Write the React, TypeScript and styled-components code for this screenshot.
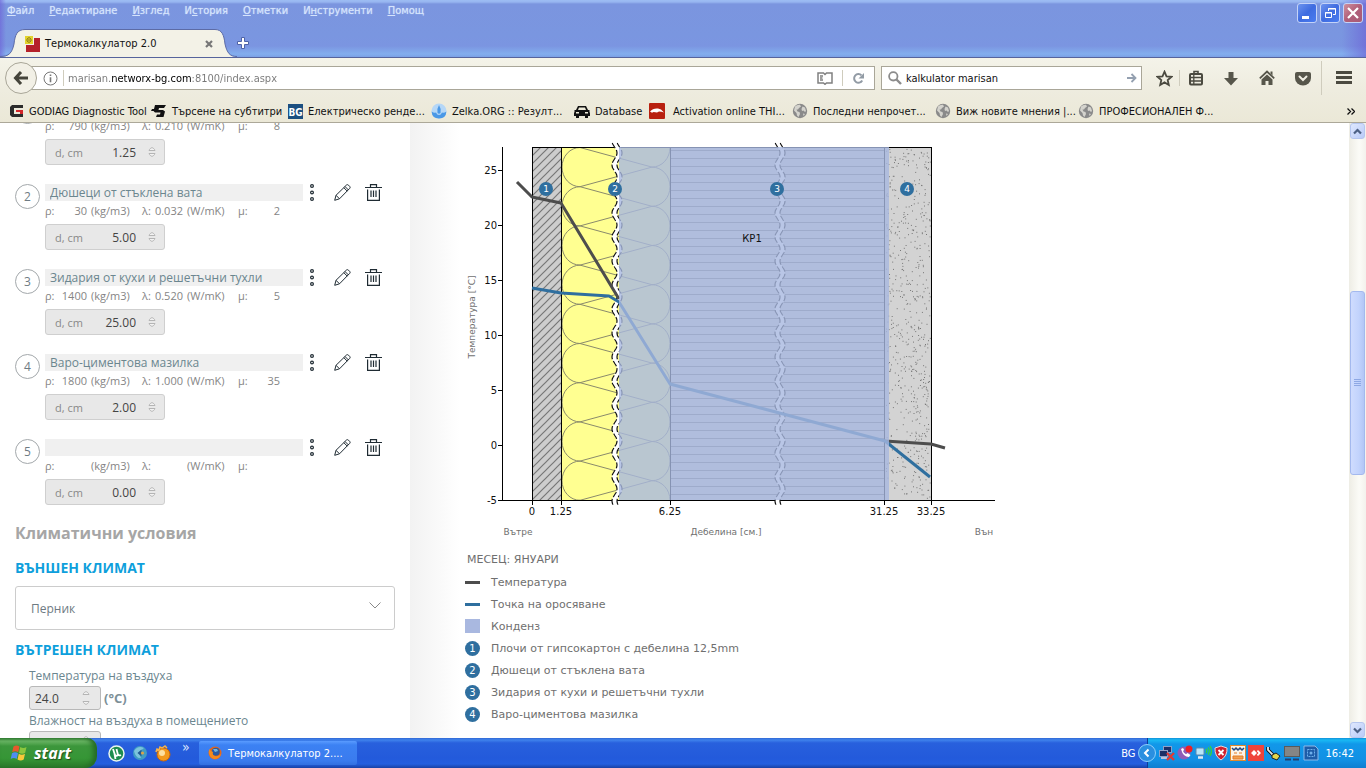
import React from 'react';
import styled, { createGlobalStyle } from 'styled-components';

const ui = '"DejaVu Sans Condensed", Tahoma, "DejaVu Sans", sans-serif';
const web = '"Open Sans", "Noto Sans", sans-serif';
const verdana = '"DejaVu Sans", Verdana, sans-serif';

const GlobalStyle = createGlobalStyle`
  * { box-sizing: border-box; }
  body { margin: 0; overflow: hidden; background: #fff; }
  button, input, select { font: inherit; color: inherit; margin: 0; padding: 0; border: 0; background: none; }
  svg { display: block; flex: none; }
  ul { list-style: none; margin: 0; padding: 0; }
  a { color: inherit; text-decoration: none; }
`;

const Screen = styled.div`
  display: flex;
  flex-direction: column;
  height: 100vh;
  font-family: ${ui};
  font-size: 11px;
  color: #111;
`;

/* ---------- Window title, menu and tabs ---------- */

const TitleArea = styled.header`
  display: flex;
  flex-direction: column;
  height: 58px;
  flex: none;
  background:
    linear-gradient(to right, rgba(111, 102, 216, 0.7) 0, rgba(111, 102, 216, 0) 6px, rgba(111, 102, 216, 0) calc(100% - 24px), rgba(106, 92, 212, 0.6) 100%),
    linear-gradient(to bottom, #9dbdf3 0, #97b5f0 2px, #7b95df 4px, #7a96e0 35px, #7b95e1 46px, #83aeee 54px, #7ba0e6 57px);
  border-bottom: 1px solid #56649c;
`;

const TitleTop = styled.div`
  display: flex;
  justify-content: space-between;
  height: 30px;
  padding: 3px 3px 0 7px;
`;

const MenuBar = styled.nav`
  display: flex;
  gap: 15px;
  height: 15px;
  line-height: 15px;
`;

const MenuItem = styled.button`
  color: #d6e4fc;
  white-space: nowrap;
  text-shadow: 0 0 1px #c5d6f8;
`;

const WindowButtons = styled.div`
  display: flex;
  gap: 3px;
`;

const WindowButton = styled.button<{ $close?: boolean }>`
  display: flex;
  align-items: center;
  justify-content: center;
  width: 20px;
  height: 20px;
  border: 1px solid #c4d3f8;
  border-radius: 3px;
  background: ${(p) => (p.$close
    ? 'linear-gradient(135deg, #d0909c, #b05f7a 50%, #a85a76)'
    : 'linear-gradient(135deg, #6c93ee, #3f6ce0 50%, #4a7cf0)')};
`;

const TabStrip = styled.div`
  display: flex;
  height: 28px;
`;

const TabBody = styled.div`
  display: flex;
  align-items: center;
  width: 190px;
  padding-right: 2px;
  background: #f3f2e7;
  border-top: 1px solid #5c6ba6;
`;

const TabTitle = styled.span`
  flex: 1;
  margin-left: 5px;
  white-space: nowrap;
`;

const IconButton = styled.button<{ $w?: number }>`
  display: flex;
  align-items: center;
  justify-content: center;
  flex: none;
  width: ${(p) => (p.$w ? `${p.$w}px` : 'auto')};
`;

/* ---------- Navigation toolbar ---------- */

const Chrome = styled.div`
  flex: none;
  background: linear-gradient(to bottom, #f4f3e9, #eeecdf 50%, #ebe8d7);
  border-bottom: 1px solid #aca899;
`;

const NavBar = styled.div`
  display: flex;
  align-items: center;
  height: 40px;
  padding-left: 5px;
`;

const BackButton = styled.button`
  display: flex;
  align-items: center;
  justify-content: center;
  position: relative;
  z-index: 1;
  width: 32px;
  height: 32px;
  flex: none;
  border: 1px solid #a9a698;
  border-radius: 50%;
  background: #f2f0e6;
`;

const Field = styled.div<{ $w?: number }>`
  display: flex;
  align-items: center;
  ${(p) => (p.$w ? `flex: none; width: ${p.$w}px;` : 'flex: 1; min-width: 0;')}
  height: 24px;
  border: 1px solid #a9a698;
  background: #fff;
`;

const AddressField = styled(Field)`
  margin-left: -6px;
  padding: 0 9px 0 11px;
`;

const SearchField = styled(Field)`
  margin: 0 7px 0 6px;
  padding: 0 4px 0 6px;
`;

const Divider = styled.span<{ $h: number }>`
  flex: none;
  width: 1px;
  height: ${(p) => p.$h}px;
  background: #cfccbd;
`;

const AddressInput = styled.input`
  flex: 1;
  min-width: 0;
  margin-left: 4px;
  outline: 0;
  background: linear-gradient(to right, #777 0, #777 43px, #000 43px, #000 124px, #777 124px);
  -webkit-background-clip: text;
  background-clip: text;
  -webkit-text-fill-color: transparent;
`;

const SearchInput = styled.input`
  flex: 1;
  min-width: 0;
  margin-left: 4px;
  outline: 0;
`;

const FieldIcons = styled.div`
  display: flex;
  align-items: center;
  gap: 9px;
`;

const InfoIcons = styled(FieldIcons)`
  gap: 5px;
`;

const Bookmarks = styled.nav`
  display: flex;
  align-items: center;
  height: 24px;
  padding: 2px 11px 0 9px;
`;

const Bookmark = styled.a<{ $w: number }>`
  display: flex;
  align-items: center;
  flex: 0 1 ${(p) => p.$w}px;
  gap: 5px;
  white-space: nowrap;
`;

const MoreBookmarks = styled.button`
  margin-left: auto;
`;

/* ---------- Page ---------- */

const Page = styled.main`
  display: flex;
  flex: 1;
  min-height: 0;
  font-family: ${web};
`;

const Sidebar = styled.section`
  flex: none;
  width: 410px;
  padding: 0 15px;
  overflow: hidden;
  color: #6e7b83;
`;

const LayerList = styled.ul`
  margin-top: -24px;
`;

const Layer = styled.li`
  display: flex;
  gap: 5px;
  height: 85px;
`;

const LayerNumber = styled.span`
  display: flex;
  align-items: center;
  justify-content: center;
  flex: none;
  width: 25px;
  height: 25px;
  border: 1px solid #a3a8ab;
  border-radius: 50%;
  font-size: 12px;
`;

const LayerBody = styled.div`
  flex: 1;
`;

const LayerHead = styled.div`
  display: flex;
  height: 17px;
`;

const NameInput = styled.input`
  width: 258px;
  height: 17px;
  padding: 0 5px;
  margin-right: 6px;
  background: #f0f0f0;
  color: #6b868f;
  font-size: 12px;
  line-height: 17px;
`;

const Tools = styled.div`
  display: flex;
  align-items: center;
`;

const PencilSlot = styled(IconButton)`
  margin: 0 14px 0 19px;
`;

const Params = styled.div`
  display: grid;
  grid-template-columns: 12px 30px 55px 15px 26px 55px 12px 30px;
  height: 20px;
  margin-bottom: 3px;
  font-size: 11px;
  line-height: 20px;
  color: #858585;
  white-space: nowrap;
`;

const ParamValue = styled.span`
  justify-self: end;
`;

const ParamUnit = styled.span`
  padding-left: 4px;
`;

const Thickness = styled.label`
  display: flex;
  align-items: center;
  width: 120px;
  height: 26px;
  padding: 0 8px 0 9px;
  border: 1px solid #cfcfcf;
  border-radius: 3px;
  background: #e8e8e8;
  font-size: 11px;
  color: #888;
`;

const ThicknessInput = styled.input`
  flex: 1;
  min-width: 0;
  margin-right: 12px;
  text-align: right;
  font-size: 12px;
  color: #444;
`;

const SectionTitle = styled.h2`
  margin: 0;
  height: 24px;
  font-size: 16px;
  line-height: 18px;
  color: #a6a6a6;
`;

const GroupTitle = styled.h3`
  margin: 0;
  padding-top: 10px;
  height: 38px;
  font-size: 14px;
  line-height: 20px;
  color: #0e9fdc;
`;

const SelectBox = styled.div`
  position: relative;
  height: 44px;
  border: 1px solid #ccc;
  border-radius: 3px;
`;

const CitySelect = styled.select`
  appearance: none;
  width: 100%;
  height: 100%;
  padding-left: 15px;
  font-size: 12px;
`;

const SelectArrow = styled.svg`
  position: absolute;
  right: 13px;
  top: 15px;
  pointer-events: none;
`;

const Climate = styled.div`
  margin-top: -3px;
  padding-left: 14px;
`;

const ClimateLabel = styled.label`
  display: block;
  height: 21px;
  font-size: 12px;
  line-height: 21px;
  color: #6b868f;
`;

const ClimateRow = styled.div`
  display: flex;
  align-items: center;
  gap: 3px;
  height: 24px;
  font-size: 13px;
  font-weight: 700;
  color: #7d9098;
`;

const ClimateField = styled.span`
  display: flex;
  align-items: center;
  width: 72px;
  height: 24px;
  padding: 0 10px 0 5px;
  border: 1px solid #b8b8b8;
  border-radius: 3px;
  background: #e8e8e8;
`;

const ClimateInput = styled.input`
  flex: 1;
  min-width: 0;
  font-size: 12px;
  font-weight: 400;
  color: #444;
`;

const Results = styled.section`
  flex: 1;
  min-width: 0;
  padding: 15px 0 0 50px;
  overflow: hidden;
  background: linear-gradient(to right, #f2f2f2 0, #f7f7f7 20px, #fff 50px);
`;

const Chart = styled.svg`
  font-family: ${verdana};
  font-size: 10px;
`;

const Legend = styled.ul`
  margin: 7px 0 0 5px;
  font-family: ${verdana};
  font-size: 11px;
  color: #6f6f6f;
`;

const LegendTitle = styled.li`
  padding-left: 2px;
  height: 22px;
  line-height: 22px;
`;

const LegendRow = styled.li`
  display: flex;
  align-items: center;
  gap: 11px;
  height: 22px;
`;

const Swatch = styled.span<{ $h: number; $color: string }>`
  width: 15px;
  height: ${(p) => p.$h}px;
  background: ${(p) => p.$color};
`;

const LegendBadge = styled.span`
  width: 15px;
  height: 15px;
  border-radius: 50%;
  background: #2f6f9f;
  color: #fff;
  font-size: 10px;
  line-height: 15px;
  text-align: center;
`;

const ScrollBar = styled.div`
  display: flex;
  flex-direction: column;
  flex: none;
  width: 17px;
  padding: 0 1px;
  background: linear-gradient(to right, #eeede5, #fbfbf7 60%, #f3f1ec);
`;

const ScrollButton = styled.button`
  display: flex;
  align-items: center;
  justify-content: center;
  flex: none;
  height: 16px;
  border: 1px solid #b5c6ef;
  border-radius: 3px;
  background: linear-gradient(135deg, #dfe8fe, #b9cbf8);
`;

const ScrollThumb = styled.div`
  display: flex;
  align-items: center;
  justify-content: center;
  height: 184px;
  border: 1px solid #a4b9ee;
  border-radius: 3px;
  background: linear-gradient(to right, #cfdcfe, #c2d3fc 60%, #b3c6f6);
`;

const ScrollGap = styled.div<{ $grow: number }>`
  flex: ${(p) => p.$grow};
`;

/* ---------- Taskbar ---------- */

const TaskBar = styled.footer`
  display: flex;
  align-items: center;
  flex: none;
  height: 30px;
  color: #fff;
  background: linear-gradient(to bottom, #3168d5 0, #3f82ec 2px, #2860dd 5px, #235adb 20px, #245fdf 26px, #1941a5 30px);
`;

const StartButton = styled.button`
  display: flex;
  align-items: center;
  gap: 6px;
  width: 97px;
  height: 30px;
  padding-left: 10px;
  border-radius: 0 10px 12px 0;
  background: linear-gradient(to bottom, #3c8a3c 0, #6cb866 3px, #3c963c 8px, #369636 20px, #2b7b2b 30px);
  box-shadow: inset -4px 0 5px #256b25;
  font-family: "Open Sans", sans-serif;
  font-size: 16px;
  font-weight: 700;
  font-style: italic;
  line-height: 20px;
  color: #fff;
  text-shadow: 1px 1px 1px #1e4f1e;
`;

const QuickLaunch = styled.div`
  display: flex;
  align-items: center;
  gap: 7px;
  width: 102px;
  height: 30px;
  padding-left: 11px;
`;

const MoreQuick = styled.button`
  align-self: flex-start;
  padding: 3px 0 0 4px;
  font-size: 14px;
  line-height: 12px;
  color: #dbe6ff;
`;

const TaskButton = styled.button`
  display: flex;
  align-items: center;
  gap: 6px;
  width: 158px;
  height: 24px;
  padding-left: 9px;
  border-radius: 2px;
  background: linear-gradient(to bottom, #5a9bff, #3c81f3 4px, #3a7bee 20px, #3370e0);
  white-space: nowrap;
`;

const Language = styled.button`
  margin-left: auto;
  padding-right: 12px;
`;

const Tray = styled.div`
  display: flex;
  align-items: center;
  gap: 2px;
  height: 30px;
  padding-right: 12px;
  border-left: 1px solid #0f3c96;
  background: linear-gradient(to bottom, #1290d8 0, #19b9f4 2px, #1198e9 6px, #1290e4 22px, #0f7ed0 30px);
`;

const TrayToggle = styled.button`
  position: relative;
  margin-left: -10px;
`;

const Clock = styled.time`
  margin-left: 4px;
  white-space: nowrap;
`;

/* ---------- Data ---------- */

interface LayerData { n: number; name: string; rho: string; lambda: string; mu: string; d: string }

const layers: LayerData[] = [
  { n: 1, name: 'Плочи от гипсокартон с дебелина 12,5mm', rho: '790', lambda: '0.210', mu: '8', d: '1.25' },
  { n: 2, name: 'Дюшеци от стъклена вата', rho: '30', lambda: '0.032', mu: '2', d: '5.00' },
  { n: 3, name: 'Зидария от кухи и решетъчни тухли', rho: '1400', lambda: '0.520', mu: '5', d: '25.00' },
  { n: 4, name: 'Варо-циментова мазилка', rho: '1800', lambda: '1.000', mu: '35', d: '2.00' },
  { n: 5, name: '', rho: '', lambda: '', mu: '', d: '0.00' },
];

const menu: [string, string, string][] = [
  ['', 'Ф', 'айл'], ['', 'Р', 'едактиране'], ['', 'И', 'зглед'], ['И', 'с', 'тория'],
  ['', 'О', 'тметки'], ['И', 'н', 'струменти'], ['', 'П', 'омощ'],
];

/* ---------- Icons ---------- */

const Globe = () => (
  <svg width="16" height="16" viewBox="0 0 16 16">
    <circle cx="8" cy="8" r="7.200" fill="#8a8a8a" />
    <path d="M3 3.500Q5 1.500 8 1.800L9 3.500 7 5 6 6.500 4.500 6.500 5.500 8.500 7.500 9 8 11 6.500 14 5 12.500 4.500 10 2 7.500zM10.500 3.500L13 4.500 14 8 13 9 11.500 7.500 10 8 9.500 6zM11 10.500l2 .5-1.500 2z" fill="#d4d3cd" />
  </svg>
);

const bookmarks: { w: number; text: string; icon: React.ReactNode }[] = [
  { w: 142, text: 'GODIAG Diagnostic Tool', icon: (
    <svg width="15" height="14" viewBox="0 0 15 14"><path d="M14 1H3L1 3v8l2 2h11v-3H5V4h9z" fill="#2b2b2b" /><path d="M7 6h7v4h-3V8H7z" fill="#d3262b" /></svg>) },
  { w: 137, text: 'Търсене на субтитри', icon: (
    <svg width="16" height="14" viewBox="0 0 16 14"><path d="M4 1h11l-2 3H8l-.5 2H12l2 1.500L12.500 13H5l1-2.500h3L9.500 8.500H4L2.500 7H0l1-2h2z" fill="#111" /></svg>) },
  { w: 143, text: 'Електрическо ренде...', icon: (
    <svg width="15" height="15" viewBox="0 0 15 15"><rect width="15" height="15" fill="#1c4f80" /><text x="7.500" y="12" textAnchor="middle" fontFamily="Liberation Sans Narrow, DejaVu Sans Condensed" fontWeight="700" fontSize="10" fill="#fff">BG</text></svg>) },
  { w: 143, text: 'Zelka.ORG :: Резулт...', icon: (
    <svg width="16" height="16" viewBox="0 0 16 16"><circle cx="8" cy="8" r="7.500" fill="#b5d7f7" /><path d="M.6 8.500Q3 10.500 5 9.500 6 12 8 12t3-2.500Q13 10.500 15.400 8.500 15 15.500 8 15.500T.6 8.500z" fill="#4a98e6" /><path d="M8 2q2.500 4 1.500 8Q8 11.500 6.500 10 5.500 6 8 2z" fill="#4a98e6" /></svg>) },
  { w: 75, text: 'Database', icon: (
    <svg width="16" height="13" viewBox="0 0 16 13"><path d="M4 1h8l2 4h1.500v2L16 8v3h-2v2h-3v-2H5v2H2v-2H0V8l.5-1V5H2z" fill="#111" /><path d="M5 2.500h6L12 5H4zM2 7h3v1.500H2zM11 7h3v1.500h-3z" fill="#ece9d8" /></svg>) },
  { w: 143, text: 'Activation online THI...', icon: (
    <svg width="19" height="16" viewBox="0 0 19 16"><rect width="16" height="16" rx="1" fill="#b8200f" /><path d="M1 8.500Q4 5 9 5.500l3 1 3 3-2.500-.8L10 8.500 8 9.500 4.500 9 3 9.800z" fill="#fff" /></svg>) },
  { w: 143, text: 'Последни непрочет...', icon: <Globe /> },
  { w: 143, text: 'Виж новите мнения |...', icon: <Globe /> },
  { w: 140, text: 'ПРОФЕСИОНАЛЕН Ф...', icon: <Globe /> },
];

const Dots = () => (
  <svg width="6" height="17" viewBox="0 0 6 17" fill="none" stroke="#1f2b33" strokeWidth="1.200">
    <circle cx="3" cy="2" r="1.400" /><circle cx="3" cy="8.500" r="1.400" /><circle cx="3" cy="15" r="1.400" />
  </svg>
);

const Pencil = () => (
  <svg width="17" height="17" viewBox="0 0 17 17" fill="none" stroke="#1f2b33" strokeWidth="1">
    <path d="M.7 16.300l1.300-5L12.500 1q1-.8 2 .2l1.200 1.200q.9 1 0 2L5.500 14.800zM2 11.300l3.500 3.500M11 2.500l3.500 3.500M9.800 3.700l3.500 3.500" />
  </svg>
);

const Trash = () => (
  <svg width="17" height="17" viewBox="0 0 17 17" fill="none" stroke="#1f2b33" strokeWidth="1.200">
    <path d="M0 3.500h17M5.500 3V.7h6V3M2.600 5.500v10.800h11.800V5.500M6 6.500v6.500M8.500 6.500v6.500M11 6.500v6.500" />
  </svg>
);

const Spinner = ({ tall }: { tall?: boolean }) => (
  <svg width="8" height={tall ? 14 : 10} viewBox={tall ? '0 0 8 14' : '0 0 8 10'} fill="#f2f2f2" stroke="#b4b4b4" strokeWidth="1">
    <path d="M1 3.500h6C6.500 2 5 .7 4 .7S1.500 2 1 3.500z" />
    <path d={tall ? 'M1 10.500h6C6.500 12 5 13.300 4 13.300S1.500 12 1 10.500z' : 'M1 6.500h6C6.500 8 5 9.300 4 9.300S1.500 8 1 6.500z'} />
  </svg>
);

const ScrollArrow = ({ up }: { up?: boolean }) => (
  <svg width="9" height="7" viewBox="0 0 9 7" fill="none" stroke="#4d6185" strokeWidth="2.200">
    <path d={up ? 'M1 5.500L4.500 2 8 5.500' : 'M1 1.500L4.500 5 8 1.500'} />
  </svg>
);

/* ---------- Chart ---------- */

const TOP = 147;
const BOTTOM = 500;

const wave = (x0: number) => {
  const pts: string[] = [];
  for (let y = 143; y <= 505; y += 1) {
    const x = x0 - 2.5 * Math.cos(((y - 165) / 24) * Math.PI * 2);
    pts.push(`${x.toFixed(1)},${y}`);
  }
  return pts.join(' ');
};

const insulation = () => {
  const step = 39.2;
  let d = '';
  for (let k = -1; k <= 10; k += 1) {
    const y = 147.5 + k * step;
    d += `M580 ${y}A18 ${step / 2} 0 0 0 580 ${y + step}`;
    d += `M652 ${y + step / 2}A18 ${step / 2} 0 0 1 652 ${y + step * 1.5}`;
    d += `M652 ${y - step / 2}L580 ${y}L652 ${y + step / 2}`;
  }
  return d;
};

const stipple = () => {
  let seed = 7;
  const next = () => {
    seed = (seed * 16807) % 2147483647;
    return seed / 2147483647;
  };
  let d = '';
  for (let i = 0; i < 620; i += 1) {
    d += `M${(886 + next() * 44).toFixed(1)} ${(149 + next() * 350).toFixed(1)}h1`;
  }
  return d;
};

const Break = ({ x }: { x: number }) => (
  <g>
    <polyline points={wave(x)} fill="none" stroke="#fff" strokeWidth="5" />
    <g fill="none" stroke="#111" strokeWidth="1.200" strokeDasharray="6 2">
      <polyline points={wave(x - 2.5)} />
      <polyline points={wave(x + 2.5)} />
    </g>
  </g>
);

const Badge = ({ x, n }: { x: number; n: number }) => (
  <g>
    <circle cx={x} cy="189" r="7" fill="#2f6f9f" />
    <text x={x} y="192" textAnchor="middle" fontSize="9" fill="#fff">{n}</text>
  </g>
);

const WallChart = () => (
  <Chart width="540" height="404" viewBox="460 138 540 404">
    <defs>
      <pattern id="hatch" width="8" height="8" patternUnits="userSpaceOnUse">
        <rect width="8" height="8" fill="#cdcdcd" />
        <path d="M-1 9L9 -1M-1 1L1 -1M7 9L9 7" stroke="#777" strokeWidth="1.200" />
      </pattern>
      <pattern id="brick" y="146" width="8" height="8" patternUnits="userSpaceOnUse">
        <rect width="8" height="8" fill="#d0d0d0" />
        <path d="M0 4.500h8" stroke="#7a7a7a" />
      </pattern>
      <clipPath id="insulationClip"><rect x="562" y="148" width="108" height="352" /></clipPath>
    </defs>

    <rect x="532" y={TOP} width="30" height={BOTTOM - TOP} fill="url(#hatch)" />
    <rect x="562" y={TOP} width="108" height={BOTTOM - TOP} fill="#ffff91" />
    <path d={insulation()} clipPath="url(#insulationClip)" fill="none" stroke="#8a8a6c" />
    <rect x="670" y={TOP} width="214" height={BOTTOM - TOP} fill="url(#brick)" />
    <rect x="884" y={TOP} width="47" height={BOTTOM - TOP} fill="#d3d3d3" />
    <path d={stipple()} stroke="#777" strokeWidth="1" />

    <g stroke="#000" fill="none" shapeRendering="crispEdges">
      <path d="M532.500 505V147.500H931.500V505M561.500 148V505M670.500 148V505M884.500 148V505" />
      <path d="M502.500 147V500.500H995" />
      <path d="M498 170.500h4M498 225.500h4M498 280.500h4M498 335.500h4M498 390.500h4M498 445.500h4M498 500.500h4" />
    </g>

    <Break x={617} />
    <Break x={780} />

    <g fill="none" strokeWidth="3" strokeLinejoin="round">
      <path d="M517 182L532 197L561 203L619 299" stroke="#4d4d4d" />
      <path d="M885 441L931 444L945 448" stroke="#4d4d4d" />
      <path d="M532 288L561 293L609 296L619 302L670 384L885 441L930 477" stroke="#2f6f9f" />
    </g>

    <rect x="619" y={TOP} width="270" height={BOTTOM - TOP} fill="#a8b8e0" fillOpacity="0.8" />

    <Badge x={546} n={1} />
    <Badge x={615} n={2} />
    <Badge x={777} n={3} />
    <Badge x={907} n={4} />

    <g fill="#111">
      <g textAnchor="end">
        {[25, 20, 15, 10, 5, 0, -5].map((t) => (
          <text key={t} x="497" y={449 - t * 11}>{t}</text>
        ))}
      </g>
      <g textAnchor="middle">
        <text x="532" y="515">0</text>
        <text x="561" y="515">1.25</text>
        <text x="670" y="515">6.25</text>
        <text x="884" y="515">31.25</text>
        <text x="931" y="515">33.25</text>
        <text x="752" y="242">КР1</text>
      </g>
    </g>
    <g fill="#6f6f6f" fontSize="9" textAnchor="middle">
      <text x="518" y="535">Вътре</text>
      <text x="726" y="535">Дебелина [см.]</text>
      <text x="984" y="535">Вън</text>
      <text transform="translate(475 317) rotate(-90)">Температура [°C]</text>
    </g>
  </Chart>
);

/* ---------- Page parts ---------- */

const LayerItem = ({ layer }: { layer: LayerData }) => (
  <Layer>
    <LayerNumber>{layer.n}</LayerNumber>
    <LayerBody>
      <LayerHead>
        <NameInput aria-label={`Слой ${layer.n}`} defaultValue={layer.name} />
        <Tools>
          <IconButton aria-label="Още"><Dots /></IconButton>
          <PencilSlot aria-label="Редактирай"><Pencil /></PencilSlot>
          <IconButton aria-label="Изтрий"><Trash /></IconButton>
        </Tools>
      </LayerHead>
      <Params>
        <span>ρ:</span><ParamValue>{layer.rho}</ParamValue><ParamUnit>(kg/m3)</ParamUnit>
        <span>λ:</span><ParamValue>{layer.lambda}</ParamValue><ParamUnit>(W/mK)</ParamUnit>
        <span>μ:</span><ParamValue>{layer.mu}</ParamValue>
      </Params>
      <Thickness>
        d, cm
        <ThicknessInput defaultValue={layer.d} />
        <Spinner />
      </Thickness>
    </LayerBody>
  </Layer>
);

const Browser = () => (
  <>
    <TitleArea>
      <TitleTop>
        <MenuBar>
          {menu.map(([a, u, b]) => (
            <MenuItem key={a + u + b}>{a}<u>{u}</u>{b}</MenuItem>
          ))}
        </MenuBar>
        <WindowButtons>
          <WindowButton aria-label="Минимизиране"><svg width="14" height="14"><rect x="2" y="10" width="7" height="3" fill="#fff" /></svg></WindowButton>
          <WindowButton aria-label="Възстановяване">
            <svg width="14" height="14" fill="none" stroke="#fff"><path d="M5.500 5V2.500h7v6H10M5 3h8M2.500 6.500h6v5h-6zM2 7h7" /></svg>
          </WindowButton>
          <WindowButton $close aria-label="Затваряне">
            <svg width="14" height="14" stroke="#fff" strokeWidth="2.200"><path d="M2 2l10 10M12 2L2 12" /></svg>
          </WindowButton>
        </WindowButtons>
      </TitleTop>
      <TabStrip>
        <svg width="25" height="28" viewBox="0 0 25 28">
          <path d="M0 28C9 28 12 24 14 15C15 6 17 .5 25 .5V28z" fill="#f3f2e7" />
          <path d="M0 27.500C9 27.500 12 24 14 15C15 6 17 .5 25 .5" fill="none" stroke="#5c6ba6" />
        </svg>
        <TabBody>
          <svg width="15" height="16" viewBox="0 0 15 16">
            <path d="M9 2h6v14H1V9h8z" fill="#b5222b" /><rect width="8" height="8" fill="#e2d32c" /><path d="M2 3l2-1.500L6 3v2L4 6.500 2 5zM4 3v2" fill="none" stroke="#8c7a1a" />
          </svg>
          <TabTitle>Термокалкулатор 2.0</TabTitle>
          <IconButton aria-label="Затвори раздела">
            <svg width="8" height="8" stroke="#777" strokeWidth="2.200"><path d="M1 1l6 6M7 1L1 7" /></svg>
          </IconButton>
        </TabBody>
        <svg width="22" height="28" viewBox="0 0 22 28">
          <path d="M22 28C15 28 12 24 10 15C9 6 7 .5 0 .5V28z" fill="#f3f2e7" />
          <path d="M22 27.500C15 27.500 12 24 10 15C9 6 7 .5 0 .5" fill="none" stroke="#5c6ba6" />
        </svg>
        <IconButton aria-label="Нов раздел">
          <svg width="12" height="12" viewBox="0 0 12 12"><path d="M4.500 .5h3v4h4v3h-4v4h-3v-4h-4v-3h4z" fill="#fff" stroke="#4f63a8" /></svg>
        </IconButton>
      </TabStrip>
    </TitleArea>
    <Chrome>
      <NavBar>
        <BackButton aria-label="Назад">
          <svg width="16" height="14" viewBox="0 0 16 14" fill="none" stroke="#45443b" strokeWidth="3"><path d="M8 1L2.500 7 8 13M3 7h12" /></svg>
        </BackButton>
        <AddressField>
          <InfoIcons>
            <svg width="15" height="15" viewBox="0 0 15 15">
              <circle cx="7.500" cy="7.500" r="6.500" fill="none" stroke="#777" /><path d="M6.700 3.500h1.600v1.600H6.700zM6.700 6.300h1.600v5H6.700z" fill="#777" />
            </svg>
            <Divider $h={16} />
          </InfoIcons>
          <AddressInput aria-label="Адрес" defaultValue="marisan.networx-bg.com:8100/index.aspx" />
          <FieldIcons>
            <IconButton aria-label="Режим за четене">
              <svg width="16" height="13" viewBox="0 0 16 13" fill="none" stroke="#808080" strokeWidth="1.500"><path d="M1 1h5.500L8 2.500 9.500 1H15v10H9.500L8 12.300 6.500 11H1zM3 4h3M3 6h2.500M3 8h3" /></svg>
            </IconButton>
            <Divider $h={16} />
            <IconButton aria-label="Презареждане">
              <svg width="13" height="13" viewBox="0 0 13 13"><path d="M10.200 8.500A4.300 4.300 0 1 1 9.500 3.400" fill="none" stroke="#929ba5" strokeWidth="2" /><path d="M12 1v5.500H6.500z" fill="#929ba5" /></svg>
            </IconButton>
          </FieldIcons>
        </AddressField>
        <SearchField $w={261}>
          <svg width="14" height="14" viewBox="0 0 14 14" fill="none" stroke="#8c8c8c"><circle cx="5.300" cy="5.300" r="4.200" strokeWidth="1.800" /><path d="M8.500 8.500L13 13" strokeWidth="2.400" /></svg>
          <SearchInput aria-label="Търсене" defaultValue="kalkulator marisan" />
          <IconButton aria-label="Търси">
            <svg width="10" height="10" viewBox="0 0 10 10" fill="none" stroke="#94a0b0" strokeWidth="1.800"><path d="M0 5h8.500M4.500 1l4 4-4 4" /></svg>
          </IconButton>
        </SearchField>
        <IconButton $w={30} aria-label="Добави отметка">
          <svg width="17" height="17" viewBox="0 0 17 17"><path d="M8.500 1.700l2 4.600 5 .5-3.800 3.300 1.100 4.900-4.300-2.600L4.200 15l1.100-4.900L1.500 6.800l5-.5z" fill="none" stroke="#4b4a40" strokeWidth="1.800" /></svg>
        </IconButton>
        <Divider $h={16} />
        <IconButton $w={32} aria-label="Отметки">
          <svg width="16" height="16" viewBox="0 0 16 16"><path d="M6 3.500V1.500h4v2" fill="none" stroke="#4b4a40" strokeWidth="1.600" /><rect x="2" y="4" width="12" height="10.500" rx="1" fill="none" stroke="#4b4a40" strokeWidth="2" /><path d="M3 7.500h10M3 11h10M5.800 5v9" stroke="#4b4a40" strokeWidth="1.300" /></svg>
        </IconButton>
        <IconButton $w={37} aria-label="Изтегляния">
          <svg width="14" height="15" viewBox="0 0 14 15"><path d="M4.500 1h5v6H14l-7 7.500L0 7h4.500z" fill="#57564b" /></svg>
        </IconButton>
        <IconButton $w={36} aria-label="Начало">
          <svg width="16" height="16" viewBox="0 0 16 16"><path d="M.8 8.300L8 1.500l7.200 6.800" fill="none" stroke="#57564b" strokeWidth="1.800" /><path d="M8 4.500l5.500 5V15H9.500v-4h-3v4H2.500V9.500zM11.500 1.500h2v4l-2-2z" fill="#57564b" /></svg>
        </IconButton>
        <IconButton $w={36} aria-label="Pocket">
          <svg width="16" height="15" viewBox="0 0 16 15"><path d="M2 1h12q2 0 2 2v4a8 7.500 0 0 1-16 0V3q0-2 2-2z" fill="#57564b" /><path d="M4.500 5.500L8 9l3.500-3.500" fill="none" stroke="#f0eee3" strokeWidth="2" strokeLinecap="round" /></svg>
        </IconButton>
        <Divider $h={34} />
        <IconButton $w={44} aria-label="Меню">
          <svg width="16" height="14" viewBox="0 0 16 14"><path d="M0 0h16v3H0zM0 5h16v3H0zM0 10h16v3H0z" fill="#4b4a40" /></svg>
        </IconButton>
      </NavBar>
      <Bookmarks>
        {bookmarks.map((b) => (
          <Bookmark key={b.text} $w={b.w} href="#">{b.icon}{b.text}</Bookmark>
        ))}
        <MoreBookmarks aria-label="Още отметки">
          <svg width="8" height="7" viewBox="0 0 8 7" fill="none" stroke="#111" strokeWidth="1.300"><path d="M.5.5l3 3-3 3M4.500.5l3 3-3 3" /></svg>
        </MoreBookmarks>
      </Bookmarks>
    </Chrome>
  </>
);

const trayIcons: React.ReactNode[] = [
  <svg key="net" width="17" height="16" viewBox="0 0 17 16"><rect x="5.500" y="1.500" width="8" height="6" fill="#1c2f66" stroke="#8ea0c8" /><rect x="1.500" y="5.500" width="8" height="6" fill="#1c2f66" stroke="#8ea0c8" /><path d="M3 13h6" stroke="#b9c3dc" strokeWidth="2" /><path d="M9 8l7 7M16 8l-7 7" stroke="#e03a35" strokeWidth="2.400" /></svg>,
  <svg key="viber" width="16" height="16" viewBox="0 0 16 16"><circle cx="7" cy="8" r="6.500" fill="#8f5db7" /><path d="M4 4q2 8 8 8l1.500-2-3-2-1.500 1.300Q6.500 8 6 6l1.200-1L6 3z" fill="#fff" /><circle cx="12" cy="4" r="3.500" fill="#ee2024" /></svg>,
  <svg key="wifi" width="17" height="16" viewBox="0 0 17 16"><rect x="1" y="3" width="8" height="7" rx="1" fill="#b9e6fa" stroke="#5f87ae" /><path d="M3 12.500h5" stroke="#e3e8f0" strokeWidth="2.500" /><path d="M11 4q1.500 2 0 4M13 2.500q2.500 3.500 0 7M15 1q3 5 0 10" fill="none" stroke="#37d23d" strokeWidth="1.300" /></svg>,
  <svg key="shield" width="14" height="16" viewBox="0 0 14 16"><path d="M7 1l6 2q.5 8-6 12Q.5 11 1 3z" fill="#cf2230" stroke="#efd6d8" /><path d="M4.500 5l5 5M9.500 5l-5 5" stroke="#fff" strokeWidth="1.800" /></svg>,
  <svg key="app" width="16" height="16" viewBox="0 0 16 16"><rect x=".5" y=".5" width="15" height="15" fill="#fbf3e6" stroke="#e08a2e" /><path d="M2 3l2 2 2-2 2 2 2-2 2 2 2-2" fill="none" stroke="#23467e" strokeWidth="1.500" /><path d="M4 8h3M9 8h3M3 11h10v3H3z" stroke="#e47b25" fill="#f0a050" /></svg>,
  <svg key="anydesk" width="16" height="16" viewBox="0 0 16 16"><rect width="16" height="16" fill="#ef443b" /><path d="M6 5l3 3-3 3-3-3zM10 5l3 3-3 3-1.200-1.200L10.500 8 8.800 6.200z" fill="#fff" /></svg>,
  <svg key="plug" width="16" height="16" viewBox="0 0 16 16"><path d="M2 2v3l5 5" fill="none" stroke="#111" strokeWidth="3.500" /><path d="M2 2v3l5 5" fill="none" stroke="#e8e8e8" strokeWidth="1.800" /><path d="M6 10l4-2 4 3-3 4-5-2z" fill="#e3d64c" stroke="#222" /></svg>,
  <svg key="screens" width="17" height="16" viewBox="0 0 17 16"><rect x=".5" y="1.500" width="15" height="10" fill="#858585" stroke="#5a5a5a" /><path d="M1 14.500h6M9 14.500h6" stroke="#25406e" strokeWidth="2" /></svg>,
  <svg key="chip" width="16" height="16" viewBox="0 0 16 16"><path d="M1 1h11l3 3v11H1z" fill="#1d5ca8" stroke="#8db7e6" /><rect x="4.500" y="4.500" width="7" height="7" fill="none" stroke="#6fb0ec" strokeDasharray="2 1" /><circle cx="8" cy="8" r="1.500" fill="#6fb0ec" /></svg>,
];

const Windows = () => (
  <TaskBar>
    <StartButton>
      <svg width="18" height="18" viewBox="0 0 18 18">
        <path d="M3.500 2.500q3-2 6 0L8.200 8.300q-3-2-6 0z" fill="#e8582c" /><path d="M10.300 3q3 2 6.200 0l-1.300 5.800q-3 2-6.200 0z" fill="#8cc63e" />
        <path d="M2 9.200q3-2 6 0L6.700 15q-3-2-6 0z" fill="#4f8df0" /><path d="M8.800 9.700q3 2 6.200 0l-1.300 5.800q-3 2-6.200 0z" fill="#f9c83a" />
      </svg>
      start
    </StartButton>
    <QuickLaunch>
      <IconButton aria-label="Torrent">
        <svg width="17" height="17" viewBox="0 0 17 17"><circle cx="8.500" cy="8.500" r="7.500" fill="#1d8c4f" stroke="#e9f5ee" strokeWidth="1.500" /><path d="M5 4l2 6q2 1.500 3 0L8.500 4M10 9.500q1 1.500 3 .5M6.500 9l1 5" fill="none" stroke="#fff" strokeWidth="1.800" /></svg>
      </IconButton>
      <IconButton aria-label="Media">
        <svg width="16" height="16" viewBox="0 0 16 16"><circle cx="8" cy="8" r="7" fill="#3f9cc4" /><path d="M2 6q4-6 10-3L6.500 7.500 9 13Q4 14 2 6z" fill="#7cc4dc" /><path d="M9.500 4.500v7L5.500 8z" fill="#235a92" /><circle cx="10.500" cy="8" r="1.600" fill="#d9a34a" /></svg>
      </IconButton>
      <IconButton aria-label="Player">
        <svg width="16" height="17" viewBox="0 0 16 17"><circle cx="8.500" cy="9.500" r="6.500" fill="#f39a1d" stroke="#c9660c" /><circle cx="7" cy="8" r="3" fill="#fde0a0" /><path d="M1 7l1-3 2 1 1-3 2 1 3-2 2 2" fill="none" stroke="#f7b34a" strokeWidth="1.500" /></svg>
      </IconButton>
      <MoreQuick>»</MoreQuick>
    </QuickLaunch>
    <TaskButton>
      <svg width="14" height="14" viewBox="0 0 14 14"><circle cx="7" cy="7" r="6.500" fill="#e5661b" /><circle cx="7.800" cy="5.800" r="4" fill="#2c5aa0" /><path d="M1 3q-1 8 5 10 6 0 7-5-3 3-6 2-3-1-2-4L3 5z" fill="#f58a1f" /><path d="M5 3l4 0 1 2-3 1z" fill="#6fb6e6" /></svg>
      Термокалкулатор 2....
    </TaskButton>
    <Language>BG</Language>
    <Tray>
      <TrayToggle aria-label="Скрити икони">
        <svg width="18" height="18" viewBox="0 0 18 18"><circle cx="9" cy="9" r="8.500" fill="#2a8fe0" stroke="#8fd0fa" /><path d="M10.500 5.500L7 9l3.500 3.500" fill="none" stroke="#fff" strokeWidth="2" /></svg>
      </TrayToggle>
      {trayIcons}
      <Clock>16:42</Clock>
    </Tray>
  </TaskBar>
);

export default function App() {
  return (
    <Screen>
      <GlobalStyle />
      <Browser />
      <Page>
        <Sidebar>
          <LayerList>
            {layers.map((l) => <LayerItem key={l.n} layer={l} />)}
          </LayerList>
          <SectionTitle>Климатични условия</SectionTitle>
          <GroupTitle><label htmlFor="city">ВЪНШЕН КЛИМАТ</label></GroupTitle>
          <SelectBox>
            <CitySelect id="city"><option>Перник</option></CitySelect>
            <SelectArrow width="12" height="7" viewBox="0 0 12 7" fill="none" stroke="#888"><path d="M.5.500L6 6 11.500.500" /></SelectArrow>
          </SelectBox>
          <GroupTitle>ВЪТРЕШЕН КЛИМАТ</GroupTitle>
          <Climate>
            <ClimateLabel htmlFor="temp">Температура на въздуха</ClimateLabel>
            <ClimateRow>
              <ClimateField><ClimateInput id="temp" defaultValue="24.0" /><Spinner tall /></ClimateField>
              (°C)
            </ClimateRow>
            <ClimateLabel htmlFor="hum">Влажност на въздуха в помещението</ClimateLabel>
            <ClimateRow>
              <ClimateField><ClimateInput id="hum" defaultValue="" /><Spinner tall /></ClimateField>
            </ClimateRow>
          </Climate>
        </Sidebar>
        <Results>
          <WallChart />
          <Legend>
            <LegendTitle>МЕСЕЦ: ЯНУАРИ</LegendTitle>
            <LegendRow><Swatch $h={3} $color="#4d4d4d" />Температура</LegendRow>
            <LegendRow><Swatch $h={3} $color="#2f6f9f" />Точка на оросяване</LegendRow>
            <LegendRow><Swatch $h={14} $color="#a9b8e0" />Конденз</LegendRow>
            {layers.slice(0, 4).map((l) => (
              <LegendRow key={l.n}><LegendBadge>{l.n}</LegendBadge>{l.name}</LegendRow>
            ))}
          </Legend>
        </Results>
        <ScrollBar>
          <ScrollButton aria-label="Нагоре"><ScrollArrow up /></ScrollButton>
          <ScrollGap $grow={152} />
          <ScrollThumb>
            <svg width="7" height="8" viewBox="0 0 7 8" stroke="#8ea8e4"><path d="M0 .5h7M0 2.500h7M0 4.500h7M0 6.500h7" /></svg>
          </ScrollThumb>
          <ScrollGap $grow={247} />
          <ScrollButton aria-label="Надолу"><ScrollArrow /></ScrollButton>
        </ScrollBar>
      </Page>
      <Windows />
    </Screen>
  );
}
